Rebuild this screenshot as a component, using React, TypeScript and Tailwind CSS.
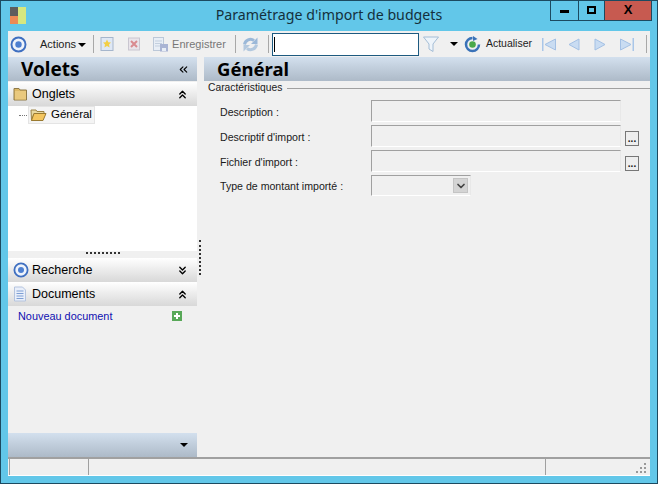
import { ChevronsUp, ChevronsDown, ChevronsLeft, ChevronDown } from "lucide-react";

const fields = [
  { label: "Description :", browse: false },
  { label: "Descriptif d'import :", browse: true },
  { label: "Fichier d'import :", browse: true },
];

function TargetIcon({ size = 16 }: { size?: number }) {
  return (
    <svg width={size} height={size} viewBox="0 0 16 16" className="shrink-0">
      <circle cx="8" cy="8" r="6.6" fill="#eef3fb" stroke="#3f6fc0" strokeWidth="1.8" />
      <circle cx="8" cy="8" r="3" fill="#4d7fd0" />
    </svg>
  );
}

function Folder({ open = false }: { open?: boolean }) {
  return (
    <svg width="17" height="14" viewBox="0 0 17 14" className="shrink-0">
      {open ? (
        <>
          <path d="M1 2h5l1 1.500h7v2H4L1.500 12.500z" fill="#e8d9a0" stroke="#9a8243" />
          <path d="M4 5.500h12L13 12.500H1.500z" fill="#f4c65f" stroke="#9a7a30" />
        </>
      ) : (
        <>
          <path d="M1 1.500h5l1 1.500h6.500v10H1z" fill="#dcb865" stroke="#8f7a48" />
          <rect x="2" y="4" width="11" height="8.500" fill="#e9c97e" />
        </>
      )}
    </svg>
  );
}

function Arrow({ d, bar }: { d: string; bar?: number }) {
  return (
    <svg width="16" height="15" viewBox="0 0 16 15" className="shrink-0">
      {bar !== undefined && <rect x={bar} y="1" width="1.500" height="13" fill="#a9c6e8" />}
      <path d={d} fill="#c9dcf2" stroke="#a3c0e4" />
    </svg>
  );
}

function Separator() {
  return <div className="w-px h-[18px] bg-[#a8a8a8] shrink-0" />;
}

function PaneHeader({ icon, title, up }: { icon: React.ReactNode; title: string; up: boolean }) {
  return (
    <div className="h-6 flex items-center pl-[5px] pr-[8px] bg-gradient-to-b from-white to-[#d8d8d8]">
      <div className="w-[19px] flex justify-start">{icon}</div>
      <span className="text-[12.500px] text-black">{title}</span>
      {up ? (
        <ChevronsUp size={13} strokeWidth={2.500} className="ml-auto text-black" />
      ) : (
        <ChevronsDown size={13} strokeWidth={2.500} className="ml-auto text-black" />
      )}
    </div>
  );
}

export default function App() {
  return (
    <div className="w-[658px] h-[484px] flex flex-col overflow-hidden bg-[#62c7e9] border border-[#1c4a60] font-['Liberation_Sans',sans-serif] text-[10.600px] text-[#1a1a1a]">
      {/* title bar */}
      <div className="h-[30px] flex shrink-0 items-start relative">
        <div className="ml-[9px] mt-[6px] w-4 h-[17px] grid grid-cols-2 shrink-0">
          <div className="bg-[#5d5d5d]" />
          <div className="bg-[#d6e77f] row-span-2" />
          <div className="bg-[#ec8a55]" />
        </div>
        <div className="flex-1 text-center pt-[3px] text-[14.200px] text-[#14303c] font-['Noto_Sans',sans-serif] pl-[82px]">
          Paramétrage d'import de budgets
        </div>
        <div className="flex h-[21px] -mt-px mr-[5px] border border-t-0 border-[#1c4a60]">
          <div className="w-[28px] flex items-center justify-center border-r border-[#1c4a60]">
            <div className="w-[9px] h-[3px] mt-[3px] bg-black" />
          </div>
          <div className="w-[26px] flex items-center justify-center border-r border-[#1c4a60]">
            <div className="w-[9px] h-[8px] border-2 border-black" />
          </div>
          <div className="w-[46px] flex items-center justify-center bg-[#c75a50] text-black font-bold text-[13px]">
            X
          </div>
        </div>
      </div>

      {/* client area */}
      <div className="flex-1 mx-[7px] flex flex-col bg-[#f0f0f0] min-h-0">
        {/* toolbar */}
        <div className="h-[26px] shrink-0 flex items-center text-[11px]">
          <div className="ml-[2px]">
            <TargetIcon size={17} />
          </div>
          <span className="ml-[13px] text-[#222]">Actions</span>
          <div className="ml-[2px] mt-[1px] border-x-[4px] border-t-[4px] border-x-transparent border-t-black" />
          <div className="ml-[7px]">
            <Separator />
          </div>
          <svg width="16" height="16" viewBox="0 0 16 16" className="ml-[5px] shrink-0">
            <rect x="2" y="1.500" width="12" height="13" fill="#dfe8f5" stroke="#a6b6cc" />
            <path d="M8 3.500l1.300 2.800 2.700.3-2 2 .6 3L8 10l-2.600 1.600.6-3-2-2 2.700-.3z" fill="#f3cf45" />
          </svg>
          <svg width="16" height="16" viewBox="0 0 16 16" className="ml-[11px] shrink-0">
            <rect x="2.500" y="2" width="11" height="12" fill="#e9e4ea" stroke="#c9c6d0" />
            <path d="M5 5l6 6M11 5l-6 6" stroke="#d98a90" strokeWidth="2" />
          </svg>
          <svg width="17" height="16" viewBox="0 0 17 16" className="ml-[10px] shrink-0">
            <rect x="1.500" y="1.500" width="10" height="13" fill="#e8eef6" stroke="#bcc8d8" />
            <path d="M3 5h7M3 7.500h7M3 10h7" stroke="#c3cfde" />
            <rect x="8" y="8" width="8" height="7.500" fill="#a9b4d4" />
            <rect x="10" y="12" width="4" height="3" fill="#e8eef6" />
          </svg>
          <span className="ml-[3px] text-[#777]">Enregistrer</span>
          <div className="ml-[9px]">
            <Separator />
          </div>
          <svg width="17" height="17" viewBox="0 0 17 17" className="ml-[6px] shrink-0">
            <path d="M2.500 8.500a6 6 0 0 1 9.500-4" fill="none" stroke="#9bb8d8" strokeWidth="3" />
            <path d="M15.500 1.500v6.500H9z" fill="#9bb8d8" />
            <path d="M14.500 8.500a6 6 0 0 1-9.500 4" fill="none" stroke="#b3c8de" strokeWidth="3" />
            <path d="M1.500 15.500V9H8z" fill="#b3c8de" />
          </svg>
          <div className="ml-[9px]">
            <Separator />
          </div>
          <div className="ml-[3px] w-[147px] h-[23px] bg-white border border-[#1d5a80] shrink-0 flex items-center pl-[1px]">
            <div className="w-px h-[15px] bg-black" />
          </div>
          <svg width="18" height="18" viewBox="0 0 18 18" className="ml-[3px] shrink-0">
            <path d="M1.500 2h15L11 9v7.500l-4-2.500V9z" fill="#eef4fa" stroke="#a4bdd6" />
          </svg>
          <div className="ml-[10px] border-x-[4px] border-t-[4px] border-x-transparent border-t-black" />
          <svg width="17" height="17" viewBox="0 0 17 17" className="ml-[6px] shrink-0">
            <path d="M8.500 2a6.500 6.500 0 1 0 6.500 6.500" fill="none" stroke="#3a72b8" strokeWidth="2.500" />
            <path d="M9 0l4.500 3L9 5z" fill="#3a72b8" />
            <circle cx="8.500" cy="8.500" r="3.300" fill="#4aa84a" />
          </svg>
          <span className="ml-[5px] text-[10.500px] text-[#222]">Actualiser</span>
          <div className="ml-[9px]"><Arrow bar={1} d="M14.500 2v11L4 7.500z" /></div>
          <div className="ml-[9px]"><Arrow d="M13 2v11L3 7.500z" /></div>
          <div className="ml-[10px]"><Arrow d="M3 2v11l10-5.500z" /></div>
          <div className="ml-[11px]"><Arrow bar={13.500} d="M1.500 2v11L12 7.500z" /></div>
          <div className="ml-[11px]">
            <Separator />
          </div>
        </div>

        {/* panes */}
        <div className="flex-1 flex min-h-0">
          {/* left */}
          <div className="w-[189px] shrink-0 flex flex-col">
            <div className="h-6 shrink-0 flex items-center justify-between pl-[13px] pr-[7px] bg-gradient-to-b from-[#d3e0ee] to-[#adbac8]">
              <span className="text-[19px] font-bold text-black font-['Noto_Sans',sans-serif]">Volets</span>
              <ChevronsLeft size={13} strokeWidth={2} className="text-black" />
            </div>
            <div className="mt-px">
              <PaneHeader icon={<Folder />} title="Onglets" up />
            </div>
            <div className="h-[145px] bg-white shrink-0 flex items-start">
              <div className="ml-[11px] mt-[9px] w-[10px] border-t border-dotted border-[#777]" />
              <div className="-ml-[1px] h-[18px] w-[67px] pl-px flex items-center gap-[4px] bg-[#f4f4f4] border border-[#e4e4e4] text-[11.500px] text-black">
                <Folder open />
                <span>Général</span>
              </div>
            </div>
            <div className="h-[7px] shrink-0 flex justify-center items-start pt-px">
              <div className="w-[34px] border-t-2 border-dotted border-[#333]" />
            </div>
            <PaneHeader icon={<TargetIcon />} title="Recherche" up={false} />
            <PaneHeader
              icon={
                <svg width="14" height="16" viewBox="0 0 14 16">
                  <path d="M1.500 1h8l3 3v11h-11z" fill="#e9effa" stroke="#b5c4de" />
                  <path d="M3.500 5h7M3.500 7.500h7M3.500 10h7M3.500 12.500h7" stroke="#7e9fd4" />
                </svg>
              }
              title="Documents"
              up
            />
            <div className="flex-1 min-h-0 flex items-start pl-[10px] pr-[15px] pt-[3px] justify-between">
              <span className="text-[10.900px] leading-[14px] text-[#1010b0]">Nouveau document</span>
              <svg width="10" height="10" viewBox="0 0 10 10" className="mt-[2px]">
                <rect width="10" height="10" fill="#58a858" />
                <path d="M5 2v6M2 5h6" stroke="#fff" strokeWidth="2" />
              </svg>
            </div>
            <div className="h-6 shrink-0 flex items-center justify-end pr-[9px] bg-gradient-to-b from-[#d3e0ee] to-[#adbac8]">
              <div className="border-x-[4px] border-t-[4px] border-x-transparent border-t-black" />
            </div>
          </div>

          {/* splitter */}
          <div className="w-[7px] shrink-0 flex items-start pt-[183px] pl-[2px]">
            <div className="h-[35px] border-l-2 border-dotted border-[#333]" />
          </div>

          {/* right */}
          <div className="flex-1 min-w-0 flex flex-col">
            <div className="h-6 shrink-0 pl-[13px] flex items-center bg-gradient-to-b from-[#d3e0ee] to-[#adbac8]">
              <span className="text-[18.500px] font-bold text-black font-['Noto_Sans',sans-serif]">Général</span>
            </div>
            <div className="flex items-center mt-[1px] h-[12px] pl-[4px] gap-[5px]">
              <span className="text-[10.300px]">Caractéristiques</span>
              <div className="flex-1 border-t border-[#a0a0a0]" />
            </div>
            <div className="mt-[6px] flex flex-col gap-[3px] pl-[16px]">
              {fields.map((f) => (
                <div key={f.label} className="flex h-[22px]">
                  <span className="w-[151px] shrink-0 pt-[5px] leading-[14px]">{f.label}</span>
                  <div className="w-[250px] shrink-0 border-t border-l border-[#a0a0a0] border-r border-b border-r-[#e8e8e8] border-b-white bg-[#f0f0f0]" />
                  {f.browse && (
                    <div className="ml-[4px] mt-[6px] w-[14px] h-[15px] border border-[#777] bg-[#eeeeee] flex justify-center text-[10px] leading-[14px] font-bold">
                      ...
                    </div>
                  )}
                </div>
              ))}
              <div className="flex h-[21px]">
                <span className="w-[151px] shrink-0 pt-[4px] leading-[14px]">Type de montant importé :</span>
                <div className="w-[100px] shrink-0 border-t border-l border-[#a0a0a0] border-r border-b border-r-[#e8e8e8] border-b-white flex items-center justify-end pr-[2px]">
                  <div className="w-[15px] h-[15px] bg-[#d4d4d4] border border-[#c4c4c4] flex items-center justify-center">
                    <ChevronDown size={12} strokeWidth={3.500} className="text-[#444]" />
                  </div>
                </div>
              </div>
            </div>
          </div>
        </div>

        {/* status bar */}
        <div className="h-[19px] shrink-0 flex border-t-2 border-b border-t-[#a0a0a0] border-b-white relative">
          <div className="ml-px w-[80px] border-l border-r border-[#a0a0a0]" />
          <div className="w-[457px] border-r border-[#a0a0a0]" />
          <svg width="12" height="12" viewBox="0 0 12 12" className="absolute right-[3px] bottom-[1px]">
            <path d="M9 1h2v2H9zM5 5h2v2H5zM9 5h2v2H9zM1 9h2v2H1zM5 9h2v2H5zM9 9h2v2H9z" fill="#999" />
          </svg>
        </div>
      </div>
      <div className="h-[7px] shrink-0" />
    </div>
  );
}
